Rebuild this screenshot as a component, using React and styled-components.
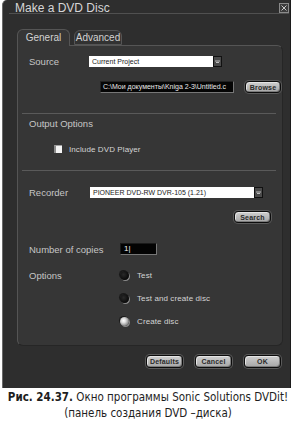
import React from "react"
import styled, { createGlobalStyle } from "styled-components"

const GlobalStyle = createGlobalStyle`
  html, body {
    margin: 0;
    padding: 0;
    background: #ffffff;
  }
  body {
    width: 296px;
    height: 428px;
    overflow: hidden;
    font-family: "Liberation Sans", Arial, sans-serif;
  }
`

const Page = styled.div`
  width: 296px;
  display: flex;
  flex-direction: column;
`

const Window = styled.div`
  margin-left: 2px;
  width: 289px;
  height: 388px;
  box-sizing: border-box;
  background: #2e2e2e;
  border-left: 1px solid #6a6a6a;
  border-right: 1px solid #1c1c1c;
  border-top-left-radius: 5px;
  display: flex;
  flex-direction: column;
`

const TitleBar = styled.div`
  height: 13px;
  margin: 0 1px 0 6px;
  border-bottom: 1px solid #505050;
  display: flex;
  align-items: center;
  justify-content: space-between;
  padding-left: 6px;
`

const Title = styled.span`
  font-size: 12px;
  color: #d6d6d6;
  line-height: 12px;
  margin-top: 3px;
`

const CloseBox = styled.div`
  width: 8px;
  height: 8px;
  border: 1px solid #8a8a8a;
  background: #3c3c3c;
  display: flex;
  align-items: center;
  justify-content: center;
  margin-top: 2px;
`

const TabBar = styled.div`
  display: flex;
  gap: 4px;
  margin: 15px 0 0 14px;
  height: 16px;
  position: relative;
  z-index: 1;
`

const Tab = styled.div`
  width: ${p => p.w}px;
  height: ${p => (p.active ? 17 : 15)}px;
  margin-top: ${p => (p.active ? 0 : 1)}px;
  box-sizing: border-box;
  background: ${p => (p.active ? "#363636" : "#323232")};
  border: 1px solid #555;
  border-bottom: ${p => (p.active ? "none" : "1px solid #555")};
  border-top-left-radius: 6px;
  border-top-right-radius: 6px;
  color: #d2d2d2;
  font-size: 10px;
  display: flex;
  align-items: center;
  justify-content: center;
  padding-bottom: 1px;
`

const Panel = styled.div`
  margin-left: 14px;
  width: 266px;
  height: 301px;
  box-sizing: border-box;
  background: #363636;
  border: 1px solid #555;
  border-right-color: #262626;
  border-bottom-color: #262626;
  border-radius: 0 6px 6px 6px;
  padding: 10px 0 0 11px;
  display: flex;
  flex-direction: column;
`

const Row = styled.div`
  display: flex;
  align-items: center;
  height: ${p => p.h || 11}px;
  margin-top: ${p => p.top || 0}px;
  padding-left: ${p => p.indent || 0}px;
`

const Label = styled.span`
  width: ${p => p.w}px;
  flex: none;
  font-size: 9.5px;
  color: #c6c6c6;
`

const Select = styled.div`
  width: ${p => p.w}px;
  height: 11px;
  display: flex;
  flex: none;
`

const SelectValue = styled.div`
  flex: 1;
  background: #ffffff;
  color: #1a1a1a;
  font-size: 7px;
  line-height: 11px;
  padding-left: 3px;
  white-space: nowrap;
  overflow: hidden;
`

const SelectArrow = styled.div`
  width: 9px;
  height: 11px;
  box-sizing: border-box;
  background: #4a4a4a;
  border: 1px solid #111;
  display: flex;
  align-items: center;
  justify-content: center;
`

const PathBox = styled.div`
  width: 134px;
  height: 12px;
  margin-left: 71px;
  box-sizing: border-box;
  background: #050505;
  border: 1px solid #777;
  border-top-color: #222;
  border-left-color: #222;
  color: #e8e8e8;
  font-size: 7px;
  line-height: 10px;
  padding-left: 2px;
  white-space: nowrap;
  overflow: hidden;
`

const Button = styled.div`
  width: ${p => p.w || 37}px;
  height: ${p => p.h || 13}px;
  margin-left: ${p => p.gap || 0}px;
  box-sizing: border-box;
  border: 1px solid #0c0c0c;
  border-radius: 4px;
  box-shadow: 0 0 0 1px #5a5a5a, inset 1px 1px 0 #e4e4e4, inset -1px -1px 0 #7c7c7c;
  background: linear-gradient(#cfcfcf, #a6a6a6);
  color: #2a2a2a;
  font-size: 7px;
  font-weight: bold;
  letter-spacing: 0.2px;
  display: flex;
  align-items: center;
  justify-content: center;
  flex: none;
`

const Separator = styled.div`
  height: 1px;
  background: #5a5a5a;
  margin: ${p => p.top}px 6px 0 -7px;
`

const SectionTitle = styled.div`
  font-size: 9.5px;
  color: #c6c6c6;
  margin-top: ${p => p.top}px;
  height: 12px;
  line-height: 12px;
`

const Check = styled.div`
  width: 8px;
  height: 8px;
  box-sizing: border-box;
  background: #f4f4f4;
  border-left: 2px solid #8c8c8c;
  border-top: 1px solid #a0a0a0;
  flex: none;
`

const SmallText = styled.span`
  font-size: 8px;
  color: #d4d4d4;
  margin-left: ${p => p.gap || 7}px;
  letter-spacing: 0.1px;
`

const Radio = styled.div`
  width: 9px;
  height: 9px;
  border-radius: 50%;
  flex: none;
  background: ${p =>
    p.on
      ? "radial-gradient(circle at 40% 40%, #ffffff 0, #dcdcdc 30%, #7a7a7a 75%)"
      : "radial-gradient(circle at 40% 40%, #2a2a2a 0, #0e0e0e 60%)"};
  box-shadow: 1px 1px 0 #8a8a8a, -1px -1px 0 #1a1a1a;
`

const CopiesInput = styled.div`
  width: 37px;
  height: 12px;
  box-sizing: border-box;
  background: #030303;
  border: 1px solid #777;
  border-top-color: #1a1a1a;
  border-left-color: #1a1a1a;
  color: #f0f0f0;
  font-size: 8px;
  line-height: 10px;
  padding-left: 3px;
`

const Footer = styled.div`
  display: flex;
  justify-content: flex-end;
  gap: 12px;
  margin-top: 9px;
  padding-right: 9px;
`

const Caption = styled.div`
  margin-top: 1px;
  font-family: "DejaVu Sans Condensed", "DejaVu Sans", sans-serif;
  font-size: 11.5px;
  line-height: 16px;
  color: #1e1e1e;
  text-align: center;
  white-space: nowrap;
  b {
    font-weight: bold;
  }
`

const Arrow = () => (
  <svg width="5" height="4" viewBox="0 0 5 4">
    <path d="M0 1h5M1 2.5h3" stroke="#bdbdbd" strokeWidth="1" />
  </svg>
)

const CloseX = () => (
  <svg width="6" height="6" viewBox="0 0 6 6">
    <path d="M0.5 0.5L5.5 5.5M5.5 0.5L0.5 5.5" stroke="#c8c8c8" strokeWidth="1" />
  </svg>
)

const options = [
  { label: "Test", on: false, top: 15 },
  { label: "Test and create disc", on: false, top: 13 },
  { label: "Create disc", on: true, top: 13 },
]

export default function App() {
  return (
    <Page>
      <GlobalStyle />
      <Window>
        <TitleBar>
          <Title>Make a DVD Disc</Title>
          <CloseBox>
            <CloseX />
          </CloseBox>
        </TitleBar>

        <TabBar>
          <Tab active w={53}>General</Tab>
          <Tab w={48}>Advanced</Tab>
        </TabBar>

        <Panel>
          <Row>
            <Label w={60}>Source</Label>
            <Select w={133}>
              <SelectValue>Current Project</SelectValue>
              <SelectArrow>
                <Arrow />
              </SelectArrow>
            </Select>
          </Row>
          <Row h={12} top={14}>
            <PathBox>C:\Мои документы\Kniga 2-3\Untitled.c</PathBox>
            <Button w={36} h={12} gap={11}>Browse</Button>
          </Row>

          <Separator top={20} />
          <SectionTitle top={4}>Output Options</SectionTitle>
          <Row h={10} top={14} indent={25}>
            <Check />
            <SmallText>Include DVD Player</SmallText>
          </Row>
          <Separator top={16} />

          <Row top={16}>
            <Label w={61}>Recorder</Label>
            <Select w={173}>
              <SelectValue>PIONEER DVD-RW  DVR-105 (1.21)</SelectValue>
              <SelectArrow>
                <Arrow />
              </SelectArrow>
            </Select>
          </Row>
          <Row h={12} top={13} indent={205}>
            <Button w={37} h={12}>Search</Button>
          </Row>

          <Row h={12} top={20}>
            <Label w={91}>Number of copies</Label>
            <CopiesInput>1|</CopiesInput>
          </Row>

          {options.map((o, i) => (
            <Row key={o.label} h={10} top={o.top}>
              <Label w={91}>{i === 0 ? "Options" : ""}</Label>
              <Radio on={o.on} />
              <SmallText gap={8}>{o.label}</SmallText>
            </Row>
          ))}
        </Panel>

        <Footer>
          <Button>Defaults</Button>
          <Button>Cancel</Button>
          <Button>OK</Button>
        </Footer>
      </Window>

      <Caption>
        <b>Рис. 24.37.</b> Окно программы Sonic Solutions DVDit!
        <br />
        (панель создания DVD –диска)
      </Caption>
    </Page>
  )
}
